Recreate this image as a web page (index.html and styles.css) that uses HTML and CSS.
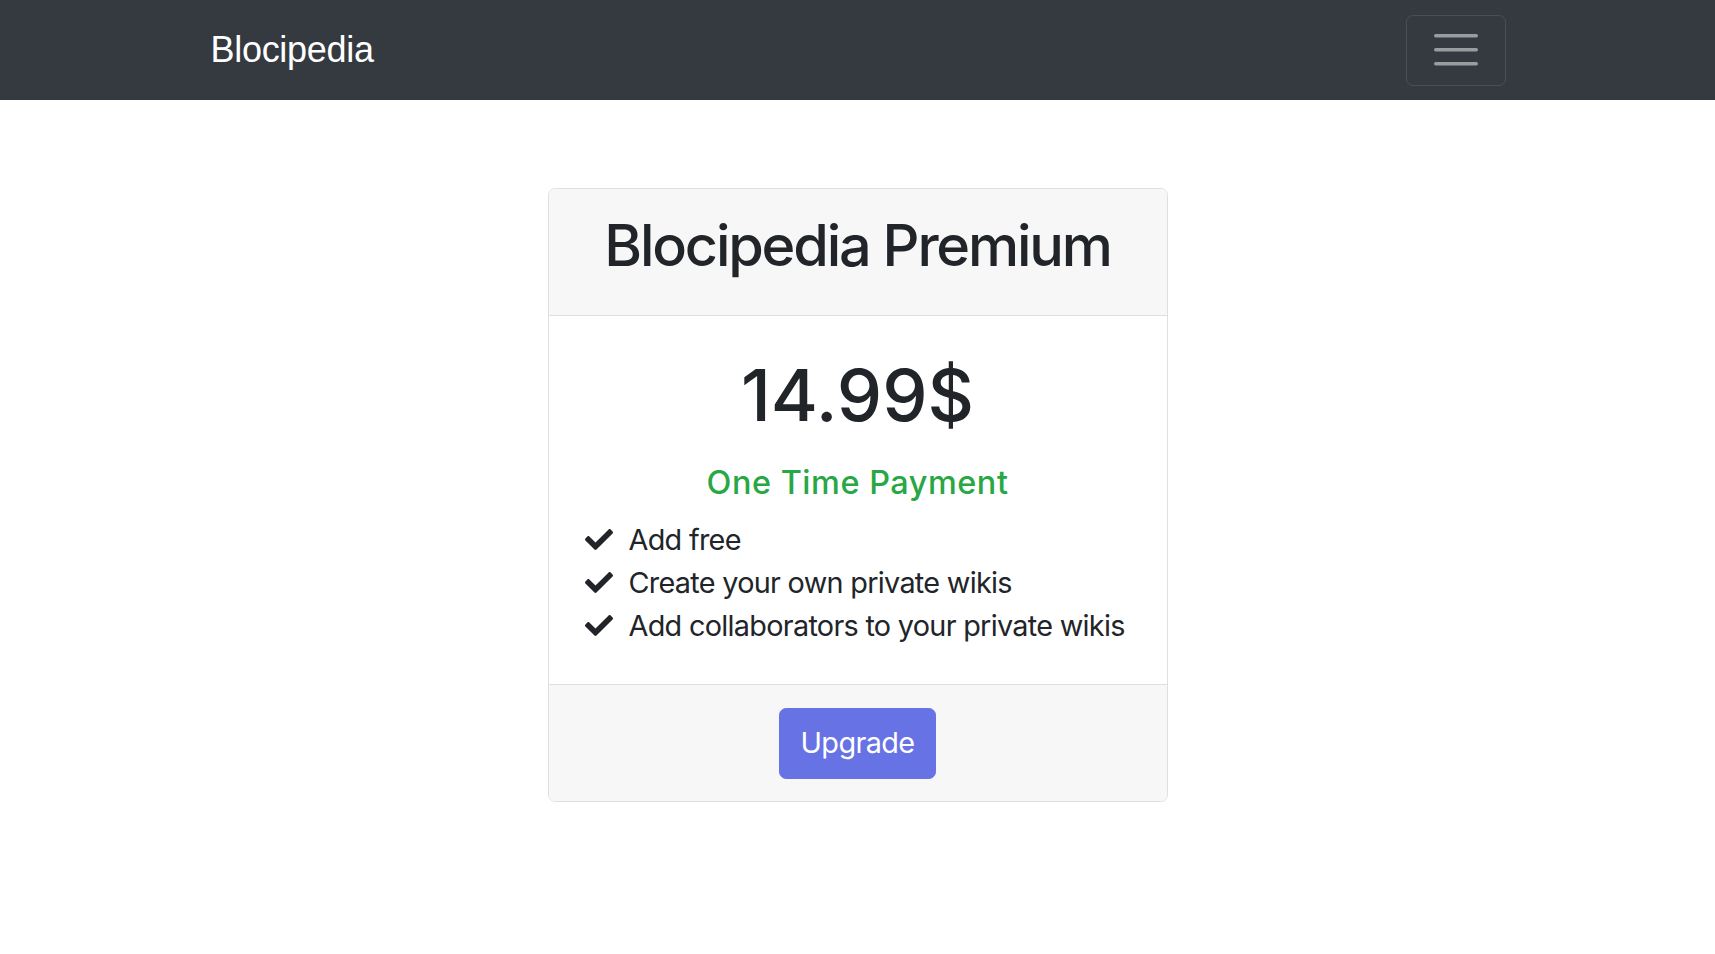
FILE: index.html
```html
<!DOCTYPE html>
<html lang="en">
<head>
<meta charset="utf-8">
<title>Blocipedia</title>
<link rel="stylesheet" href="styles.css">
</head>
<body>
<nav class="navbar">
  <div class="navbar-inner">
    <a class="brand" href="#">Blocipedia</a>
    <button class="toggler" type="button" aria-label="Toggle navigation">
      <svg width="44" height="32" viewBox="0 0 44 32" aria-hidden="true">
        <path d="M1.8 1.8h40.4M1.8 15.8h40.4M1.8 29.8h40.4" stroke="rgba(255,255,255,0.5)" stroke-width="3.6" stroke-linecap="round" fill="none"/>
      </svg>
    </button>
  </div>
</nav>
<main class="main">
  <div class="card">
    <div class="card-header">
      <h2 class="card-title">Blocipedia Premium</h2>
    </div>
    <div class="card-body">
      <h1 class="price">14.99$</h1>
      <h5 class="payment">One Time Payment</h5>
      <ul class="features">
        <li><svg class="check" width="28" height="21" viewBox="0 65 512 382" aria-hidden="true"><path d="M173.898 439.404l-166.4-166.4c-9.997-9.997-9.997-26.206 0-36.204l36.203-36.204c9.997-9.998 26.207-9.998 36.204 0L192 312.69 432.095 72.596c9.997-9.997 26.207-9.997 36.204 0l36.203 36.204c9.997 9.997 9.997 26.206 0 36.204l-294.4 294.401c-9.998 9.997-26.207 9.997-36.204-.001z"/></svg><span>Add free</span></li>
        <li><svg class="check" width="28" height="21" viewBox="0 65 512 382" aria-hidden="true"><path d="M173.898 439.404l-166.4-166.4c-9.997-9.997-9.997-26.206 0-36.204l36.203-36.204c9.997-9.998 26.207-9.998 36.204 0L192 312.69 432.095 72.596c9.997-9.997 26.207-9.997 36.204 0l36.203 36.204c9.997 9.997 9.997 26.206 0 36.204l-294.4 294.401c-9.998 9.997-26.207 9.997-36.204-.001z"/></svg><span>Create your own private wikis</span></li>
        <li><svg class="check" width="28" height="21" viewBox="0 65 512 382" aria-hidden="true"><path d="M173.898 439.404l-166.4-166.4c-9.997-9.997-9.997-26.206 0-36.204l36.203-36.204c9.997-9.998 26.207-9.998 36.204 0L192 312.69 432.095 72.596c9.997-9.997 26.207-9.997 36.204 0l36.203 36.204c9.997 9.997 9.997 26.206 0 36.204l-294.4 294.401c-9.998 9.997-26.207 9.997-36.204-.001z"/></svg><span>Add collaborators to your private wikis</span></li>
      </ul>
    </div>
    <div class="card-footer">
      <button class="btn-upgrade" type="button">Upgrade</button>
    </div>
  </div>
</main>
</body>
</html>
```
FILE: styles.css
```css
* { box-sizing: border-box; }
html, body { margin: 0; padding: 0; }
body {
  font-family: Inter, "Noto Sans", "Liberation Sans", sans-serif;
  font-size: 28.8px;
  line-height: 1.5;
  color: #212529;
  background: #fff;
}
.navbar {
  background: #343a40;
  height: 100px;
  padding: 14.4px 0;
}
.navbar-inner {
  width: 1296px;
  margin: 0 auto;
  height: 100%;
  display: flex;
  align-items: center;
  justify-content: space-between;
}
.brand {
  color: #fff;
  text-decoration: none;
  font-family: "Liberation Sans", Arial, sans-serif;
  font-size: 36px;
  line-height: 54px;
  letter-spacing: -0.3px;
  padding-left: 1px;
}
.toggler {
  width: 100px;
  height: 71px;
  border: 1px solid rgba(255,255,255,0.1);
  border-radius: 7.2px;
  background: transparent;
  padding: 0;
  display: flex;
  align-items: center;
  justify-content: center;
}
.toggler svg { display: block; }
.main {
  display: flex;
  justify-content: center;
  padding-top: 88px;
}
.card {
  width: 620px;
  border: 1px solid #dfdfdf;
  border-radius: 7.2px;
  overflow: hidden;
}
.card-header {
  background: #f7f7f7;
  border-bottom: 1px solid #dfdfdf;
  padding: 22px 20px 21px;
  text-align: center;
}
.card-title {
  margin: 0 0 14px;
  font-size: 57.6px;
  line-height: 69px;
  font-weight: 500;
  letter-spacing: -2.2px;
  white-space: nowrap;
}
.card-body {
  padding: 36px 36px 36px;
}
.price {
  margin: 0;
  text-align: center;
  font-size: 72px;
  line-height: 86px;
  font-weight: 500;
  letter-spacing: 0;
}
.payment {
  margin: 25px 0 16px;
  text-align: center;
  color: #28a745;
  font-size: 32.4px;
  line-height: 39px;
  font-weight: 500;
  letter-spacing: 0.55px;
}
.features {
  list-style: none;
  margin: 0;
  padding: 0;
}
.features li {
  display: flex;
  align-items: center;
  gap: 16px;
  height: 43.2px;
  white-space: nowrap;
  letter-spacing: -0.7px;
}
.check { fill: #212529; flex: none; }
.card-footer {
  background: #f7f7f7;
  border-top: 1px solid #dfdfdf;
  padding: 23px 0 22px;
  display: flex;
  justify-content: center;
}
.btn-upgrade {
  font-family: inherit;
  font-size: 28.8px;
  line-height: 43.2px;
  letter-spacing: -0.6px;
  color: #fff;
  background: #6772e5;
  border: 1px solid #6772e5;
  border-radius: 7.2px;
  width: 157px;
  height: 71px;
  padding: 0;
}
```
